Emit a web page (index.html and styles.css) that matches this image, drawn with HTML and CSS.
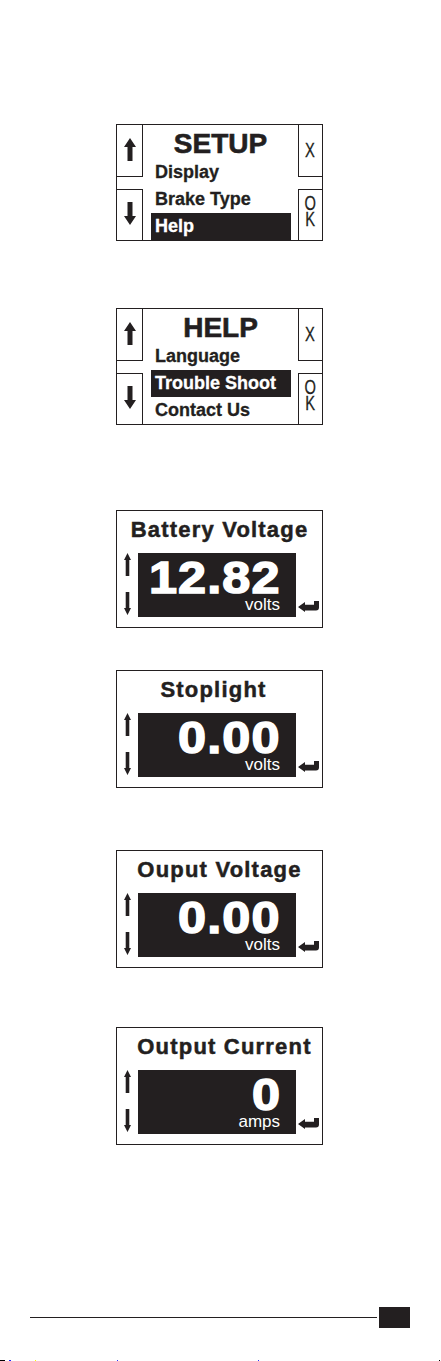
FILE: index.html
```html
<!doctype html>
<html lang="en">
<head>
    <meta charset="UTF-8">
    <title>Controller screens</title>
    <link rel="stylesheet" href="styles.css">
</head>
<body>
<div class="screens">
    <div class="menu">
        <div class="side side-left">
            <div class="key key-top">
                <svg class="arrow" width="12" height="23" viewBox="0 0 12 23"><path d="M6 0 L12 9 H8.5 V23 H3.5 V9 H0 Z"/></svg>
            </div>
            <div class="key key-bottom">
                <svg class="arrow" width="12" height="23" viewBox="0 0 12 23"><path d="M6 23 L12 14 H8.5 V0 H3.5 V14 H0 Z"/></svg>
            </div>
        </div>
        <div class="menu-body">
            <div class="menu-title">SETUP</div>
            <ul class="menu-list">
                <li>Display</li>
                <li>Brake Type</li>
                <li class="selected">Help</li>
            </ul>
        </div>
        <div class="side side-right">
            <div class="key key-top"><span class="key-label">X</span></div>
            <div class="key key-bottom"><span class="key-label">O<br>K</span></div>
        </div>
    </div>

    <div class="menu menu-help">
        <div class="side side-left">
            <div class="key key-top">
                <svg class="arrow" width="12" height="23" viewBox="0 0 12 23"><path d="M6 0 L12 9 H8.5 V23 H3.5 V9 H0 Z"/></svg>
            </div>
            <div class="key key-bottom">
                <svg class="arrow" width="12" height="23" viewBox="0 0 12 23"><path d="M6 23 L12 14 H8.5 V0 H3.5 V14 H0 Z"/></svg>
            </div>
        </div>
        <div class="menu-body">
            <div class="menu-title">HELP</div>
            <ul class="menu-list">
                <li>Language</li>
                <li class="selected">Trouble Shoot</li>
                <li>Contact Us</li>
            </ul>
        </div>
        <div class="side side-right">
            <div class="key key-top"><span class="key-label">X</span></div>
            <div class="key key-bottom"><span class="key-label">O<br>K</span></div>
        </div>
    </div>

    <div class="reading reading-battery">
        <div class="reading-title">Battery Voltage</div>
        <div class="reading-row">
            <div class="scroll">
                <svg width="7" height="23" viewBox="0 0 7 23"><path d="M3.5 0 L7 7 H5.3 V23 H1.7 V7 H0 Z"/></svg>
                <svg width="7" height="23" viewBox="0 0 7 23"><path d="M3.5 23 L7 16 H5.3 V0 H1.7 V16 H0 Z"/></svg>
            </div>
            <div class="display">
                <div class="value">12.82</div>
                <div class="unit">volts</div>
            </div>
            <div class="enter">
                <svg width="21" height="12" viewBox="0 0 21 12"><path d="M0 7 L7 2 V4.8 H16 V1 H21 V7.5 Q21 10.5 18 10.5 H7 V12 Z"/></svg>
            </div>
        </div>
    </div>

    <div class="reading reading-stoplight">
        <div class="reading-title title-left">Stoplight</div>
        <div class="reading-row">
            <div class="scroll">
                <svg width="7" height="23" viewBox="0 0 7 23"><path d="M3.5 0 L7 7 H5.3 V23 H1.7 V7 H0 Z"/></svg>
                <svg width="7" height="23" viewBox="0 0 7 23"><path d="M3.5 23 L7 16 H5.3 V0 H1.7 V16 H0 Z"/></svg>
            </div>
            <div class="display">
                <div class="value">0.00</div>
                <div class="unit">volts</div>
            </div>
            <div class="enter">
                <svg width="21" height="12" viewBox="0 0 21 12"><path d="M0 7 L7 2 V4.8 H16 V1 H21 V7.5 Q21 10.5 18 10.5 H7 V12 Z"/></svg>
            </div>
        </div>
    </div>

    <div class="reading reading-output">
        <div class="reading-title">Ouput Voltage</div>
        <div class="reading-row">
            <div class="scroll">
                <svg width="7" height="23" viewBox="0 0 7 23"><path d="M3.5 0 L7 7 H5.3 V23 H1.7 V7 H0 Z"/></svg>
                <svg width="7" height="23" viewBox="0 0 7 23"><path d="M3.5 23 L7 16 H5.3 V0 H1.7 V16 H0 Z"/></svg>
            </div>
            <div class="display">
                <div class="value">0.00</div>
                <div class="unit">volts</div>
            </div>
            <div class="enter">
                <svg width="21" height="12" viewBox="0 0 21 12"><path d="M0 7 L7 2 V4.8 H16 V1 H21 V7.5 Q21 10.5 18 10.5 H7 V12 Z"/></svg>
            </div>
        </div>
    </div>

    <div class="reading reading-current">
        <div class="reading-title title-right">Output Current</div>
        <div class="reading-row">
            <div class="scroll">
                <svg width="7" height="23" viewBox="0 0 7 23"><path d="M3.5 0 L7 7 H5.3 V23 H1.7 V7 H0 Z"/></svg>
                <svg width="7" height="23" viewBox="0 0 7 23"><path d="M3.5 23 L7 16 H5.3 V0 H1.7 V16 H0 Z"/></svg>
            </div>
            <div class="display">
                <div class="value">0</div>
                <div class="unit">amps</div>
            </div>
            <div class="enter">
                <svg width="21" height="12" viewBox="0 0 21 12"><path d="M0 7 L7 2 V4.8 H16 V1 H21 V7.5 Q21 10.5 18 10.5 H7 V12 Z"/></svg>
            </div>
        </div>
    </div>
</div>

<div class="footer">
    <div class="rule"></div>
    <div class="tab"></div>
</div>
<div class="marks"></div>
</body>
</html>
```

FILE: styles.css
```css
body {
    margin: 0;
    font-family: "Liberation Sans", Arial, sans-serif;
    color: #231f20;
    background: #fff;
}

.screens {
    display: flex;
    flex-direction: column;
    padding: 124px 0 0 116px;
}

/* menu screens */

.menu {
    display: flex;
    width: 207px;
    height: 117px;
    box-sizing: border-box;
    border: 1px solid #231f20;
}

.menu-help {
    margin-top: 67px;
}

.side {
    display: flex;
    flex-direction: column;
    justify-content: space-between;
}

.side-left {
    width: 26px;
}

.side-right {
    width: 24px;
}

.key {
    display: flex;
    align-items: center;
    justify-content: center;
    box-sizing: border-box;
}

.key-top {
    height: 52px;
    border-bottom: 1px solid #231f20;
}

.key-bottom {
    height: 51px;
    border-top: 1px solid #231f20;
}

.side-left .key {
    border-right: 1px solid #231f20;
}

.side-right .key {
    border-left: 1px solid #231f20;
}

.side-left .key-top,
.side-left .key-bottom {
    padding-bottom: 3px;
}

.arrow {
    fill: #231f20;
}

.key-label {
    display: inline-block;
    font-size: 21px;
    line-height: 16px;
    text-align: center;
    transform: scaleX(0.7);
    -webkit-text-stroke: 0.3px #231f20;
}

.side-right .key-top {
    padding-bottom: 2px;
}

.side-right .key-bottom {
    padding-bottom: 8px;
}

.menu-body {
    flex: 1;
    padding-top: 3px;
}

.menu-title {
    font-size: 28px;
    font-weight: bold;
    line-height: 31px;
    text-align: center;
    -webkit-text-stroke: 0.6px #231f20;
}

.menu-list {
    margin: 0;
    padding: 0;
    list-style: none;
}

.menu-list li {
    margin: 0 7px 0 8px;
    padding-left: 4px;
    font-size: 18px;
    font-weight: bold;
    line-height: 27px;
    -webkit-text-stroke: 0.3px currentColor;
}

.menu-list .selected {
    background: #231f20;
    color: #fff;
}

/* reading screens */

.reading {
    width: 207px;
    box-sizing: border-box;
    border: 1px solid #231f20;
    padding: 6px 0 10px;
}

.reading-battery {
    margin-top: 85px;
}

.reading-stoplight {
    margin-top: 42px;
}

.reading-output {
    margin-top: 62px;
}

.reading-current {
    margin-top: 59px;
}

.reading-title {
    font-size: 22px;
    font-weight: bold;
    line-height: 26px;
    letter-spacing: 1.2px;
    text-align: center;
    -webkit-text-stroke: 0.5px #231f20;
}

.title-left {
    padding-right: 12px;
}

.title-right {
    padding-left: 10px;
}

.reading-row {
    display: flex;
    height: 64px;
    margin-top: 10px;
}

.scroll {
    width: 21px;
    display: flex;
    flex-direction: column;
    align-items: center;
    justify-content: space-between;
    padding-bottom: 2px;
    box-sizing: border-box;
    fill: #231f20;
}

.display {
    width: 158px;
    display: flex;
    flex-direction: column;
    align-items: flex-end;
    padding-right: 16px;
    box-sizing: border-box;
    background: #231f20;
    color: #fff;
}

.value {
    padding-top: 5px;
    font-size: 45px;
    font-weight: bold;
    line-height: 40px;
    letter-spacing: 1px;
    margin-right: -1px;
    transform: scaleX(1.12);
    transform-origin: right center;
    -webkit-text-stroke: 1.5px #fff;
}

.unit {
    font-size: 17px;
    line-height: 14px;
}

.enter {
    flex: 1;
    display: flex;
    align-items: flex-end;
    padding: 0 0 5px 2px;
    fill: #231f20;
}

/* page footer */

.footer {
    display: flex;
    align-items: center;
    margin-top: 162px;
    padding-left: 30px;
}

.rule {
    width: 347px;
    height: 1px;
    background: #231f20;
}

.tab {
    width: 31px;
    height: 21px;
    margin-left: 2px;
    background: #231f20;
}

.marks {
    height: 1px;
    margin-top: 32px;
    background: linear-gradient(to right,
        #000 0 5px, transparent 5px 9px, #22f 9px 11px, transparent 11px 35px,
        #ff0 35px 36px, transparent 36px 117px, #33f 117px 118px,
        transparent 118px 258px, #33f 258px 259px, transparent 259px 439px,
        #000 439px 440px, transparent 440px);
}
```
